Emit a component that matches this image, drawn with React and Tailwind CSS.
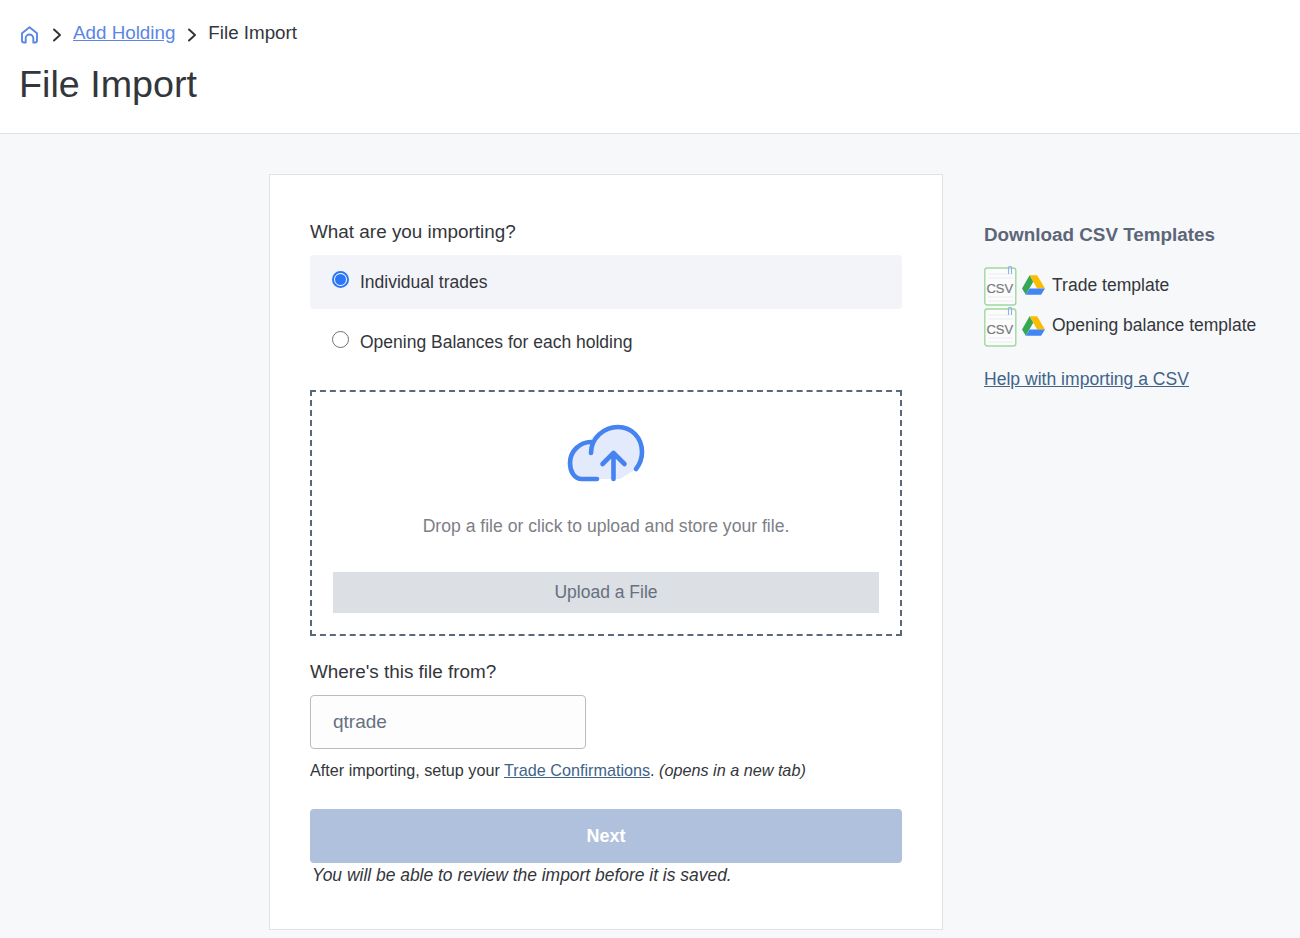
import React from "react";

const CsvIcon = () => (
  <svg width="33" height="40" viewBox="0 0 33 40" className="shrink-0">
    <rect x="0.800" y="2" width="31" height="37" rx="2.500" fill="#fbfcfb" stroke="#9fd89e" strokeWidth="1.400" />
    <path d="M4 8h25M4 12h25M4 31h25M4 35h25" stroke="#ececf1" strokeWidth="1.200" />
    <path d="M24.500 8V1.800a1.500 1.500 0 0 1 3 0V8" fill="none" stroke="#8fb0ea" strokeWidth="1.100" />
    <text x="15.800" y="27" textAnchor="middle" fontSize="13" stroke="#77797d" strokeWidth="0.200" fill="#77797d" fontFamily="'Liberation Sans', Arial, sans-serif">CSV</text>
  </svg>
);

const DriveIcon = () => (
  <svg width="23" height="20" viewBox="0 0 88 76" className="shrink-0">
    <path d="M29 1 0 51l14.500 24 29-50z" fill="#34a853" />
    <path d="M29 1h29l30 50H58z" fill="#fbbc04" />
    <path d="M29 51h59L73 75H14.500z" fill="#4285f4" />
  </svg>
);

const Chevron = () => (
  <svg width="10" height="14" viewBox="0 0 10 14" fill="none" stroke="#2f3237" strokeWidth="1.900" strokeLinecap="round" strokeLinejoin="round" className="shrink-0">
    <path d="M2 1.500 8 7l-6 5.500" />
  </svg>
);

export default function App() {
  return (
    <div className="min-h-screen bg-[#f7f8fa] text-[#33363b] font-['Liberation_Sans',Arial,sans-serif]">
      <header className="h-[134px] bg-white border-b border-[#e0e2e6] pl-[19px] pt-[20px]">
        <nav className="flex items-center h-[26px] text-[18.8px] leading-[26px]">
          <svg width="19" height="19" viewBox="0 0 19 19" fill="none" stroke="#5b86e5" strokeWidth="1.900" strokeLinecap="round" strokeLinejoin="round" className="mt-[3px] ml-[1px] shrink-0">
            <path d="M2 8.200 9.500 2.200 17 8.200V15.500a2 2 0 0 1-2 2h-1.700v-4.200a3.800 3.800 0 0 0-7.600 0v4.200H4a2 2 0 0 1-2-2z" />
          </svg>
          <span className="ml-[13px] mt-[3px] flex"><Chevron /></span>
          <a href="#" className="ml-[11px] text-[#5b86e5] underline">Add Holding</a>
          <span className="ml-[12px] mt-[3px] flex"><Chevron /></span>
          <span className="ml-[11px]">File Import</span>
        </nav>
        <h1 className="mt-[16px] text-[37.7px] leading-[44px] font-normal">File Import</h1>
      </header>

      <main className="flex items-start pl-[269px] pt-[40px] pb-[8px]">
        <section className="w-[674px] h-[756px] shrink-0 bg-white border border-[#e0e2e6] px-[40px] pt-[44px]">
          <p className="text-[18.9px] leading-[26px]">What are you importing?</p>
          <label className="mt-[10px] h-[54px] flex items-center rounded bg-[#f3f4f9] pl-[22px]">
            <span className="w-[17px] h-[17px] rounded-full border-2 border-[#2a76f6] bg-white flex items-center justify-center mb-[5px]">
              <span className="w-[11px] h-[11px] rounded-full bg-[#2a76f6]" />
            </span>
            <span className="ml-[11px] text-[17.5px]">Individual trades</span>
          </label>
          <label className="mt-[6px] h-[54px] flex items-center pl-[22px]">
            <span className="w-[17px] h-[17px] rounded-full border border-[#707070] bg-white mb-[5px]" />
            <span className="ml-[11px] text-[17.5px]">Opening Balances for each holding</span>
          </label>

          <div className="mt-[21px] h-[246px] border-2 border-dashed border-[#5c6878] flex flex-col items-center px-[21px] pt-[32px]">
            <svg width="80" height="60" viewBox="0 0 80 60" fill="none" strokeLinecap="round" strokeLinejoin="round" className="shrink-0">
              <path d="M14 55C8 55 4 47 4 39 4 27 14 18 24 18 27 9 38 3 52 3c14 0 24 11 24 25 0 6-2 12-6 17L54 55z" fill="#e3eafb" />
              <path d="M31 55H16C8 55 4 47 4 39 4 27 14 18 25 18" stroke="#4583f0" strokeWidth="4.600" />
              <path d="M25 29C25 14 38 3 52 3c14 0 24 11 24 25 0 6-2 12-6 17" stroke="#4583f0" strokeWidth="4.600" />
              <path d="M47.500 55V29M36.500 40 47.500 29l11 11" stroke="#4583f0" strokeWidth="4.600" />
            </svg>
            <p className="mt-[29px] text-[17.6px] leading-[26px] text-[#7d8086]">Drop a file or click to upload and store your file.</p>
            <button className="mt-[33px] w-full h-[41px] shrink-0 bg-[#dcdfe4] text-[17.5px] text-[#667080]">Upload a File</button>
          </div>

          <p className="mt-[23px] text-[18.9px] leading-[26px]">Where's this file from?</p>
          <input readOnly value="qtrade" className="mt-[10px] block w-[276px] h-[54px] rounded border border-[#b9bcc2] bg-[#fdfdfe] px-[22px] text-[19px] text-[#667080]" />
          <p className="mt-[9px] text-[16.2px] leading-[24px]">
            After importing, setup your <a href="#" className="text-[#3f6489] underline">Trade Confirmations</a>. <em>(opens in a new tab)</em>
          </p>
          <button className="mt-[27px] block w-full h-[54px] rounded bg-[#b0c1de] text-lg font-bold text-white">Next</button>
          <p className="pl-[2px] text-[17.46px] leading-[24px] italic">You will be able to review the import before it is saved.</p>
        </section>

        <aside className="ml-[41px] w-[310px] pt-[47px]">
          <h2 className="text-[18.85px] leading-[28px] font-bold text-[#5c6678]">Download CSV Templates</h2>
          <div className="mt-[17px] flex items-center h-[40px]">
            <CsvIcon />
            <span className="ml-[5px] mb-[2px] flex"><DriveIcon /></span>
            <a href="#" className="ml-[7px] mb-[2px] text-[17.55px]">Trade template</a>
          </div>
          <div className="flex items-center h-[40px] mt-[1px]">
            <CsvIcon />
            <span className="ml-[5px] mb-[2px] flex"><DriveIcon /></span>
            <a href="#" className="ml-[7px] mb-[4px] text-[17.5px]">Opening balance template</a>
          </div>
          <a href="#" className="block mt-[19px] text-[17.57px] leading-[26px] text-[#3f6489] underline">Help with importing a CSV</a>
        </aside>
      </main>
    </div>
  );
}
